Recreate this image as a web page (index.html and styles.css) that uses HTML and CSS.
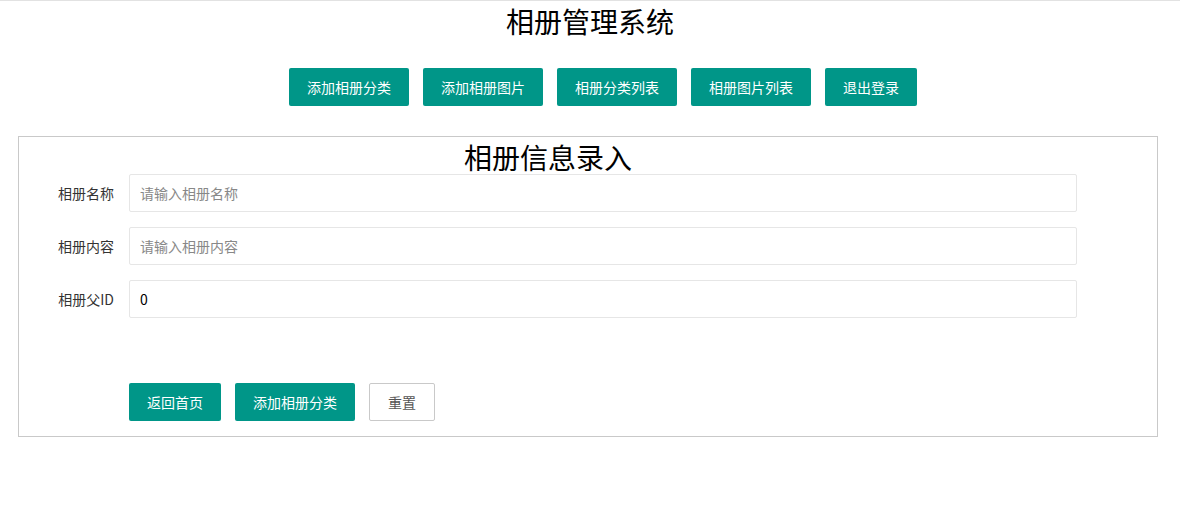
FILE: index.html
```html
<!DOCTYPE html>
<html lang="zh-CN">
<head>
<meta charset="utf-8">
<title>相册管理系统</title>
<link rel="stylesheet" href="styles.css">
</head>
<body>
<div class="page">
  <h1 class="site-title">相册管理系统</h1>
  <nav class="nav">
    <button class="btn">添加相册分类</button>
    <button class="btn">添加相册图片</button>
    <button class="btn">相册分类列表</button>
    <button class="btn">相册图片列表</button>
    <button class="btn">退出登录</button>
  </nav>
  <div class="panel">
    <form class="form">
      <h2 class="form-title">相册信息录入</h2>
      <div class="form-item">
        <label class="form-label">相册名称</label>
        <div class="input-block"><input class="input" type="text" placeholder="请输入相册名称"></div>
      </div>
      <div class="form-item">
        <label class="form-label">相册内容</label>
        <div class="input-block"><input class="input" type="text" placeholder="请输入相册内容"></div>
      </div>
      <div class="form-item">
        <label class="form-label">相册父ID</label>
        <div class="input-block"><input class="input" type="text" value="0"></div>
      </div>
      <div class="form-actions">
        <button type="button" class="btn">返回首页</button>
        <button type="button" class="btn">添加相册分类</button>
        <button type="reset" class="btn btn-primary">重置</button>
      </div>
    </form>
  </div>
</div>
</body>
</html>
```
FILE: styles.css
```css
* { box-sizing: border-box; }
html, body { margin: 0; padding: 0; background: #fff; }
body {
  font-family: "Noto Sans CJK SC", "Noto Sans", "Liberation Sans", sans-serif;
  font-size: 14px;
  color: #333;
}
.page {
  border-top: 1px solid #e2e2e2;
  min-height: 509px;
}
.site-title {
  margin: 0;
  font-size: 28px;
  font-weight: normal;
  color: #000;
  text-align: center;
  height: 40px;
  line-height: 40px;
}
.nav {
  display: flex;
  justify-content: center;
  gap: 14px;
  margin-top: 27px;
  padding-left: 26px;
}
.btn {
  display: inline-block;
  height: 38px;
  line-height: 38px;
  padding: 0 18px;
  border: none;
  border-radius: 2px;
  background: #009688;
  color: #fff;
  font-family: inherit;
  font-size: 14px;
  white-space: nowrap;
  cursor: pointer;
}
.btn-primary {
  background: #fff;
  color: #555;
  border: 1px solid #c9c9c9;
  line-height: 36px;
}
.panel {
  margin: 30px 22px 0 18px;
  border: 1px solid #c9c9c9;
  padding-bottom: 15px;
}
.form {
  width: 1058px;
}
.form-title {
  margin: 0;
  font-size: 28px;
  font-weight: normal;
  color: #000;
  text-align: center;
  height: 37px;
  line-height: 40px;
}
.form-item {
  display: flex;
  margin-bottom: 15px;
}
.form-label {
  width: 110px;
  padding: 9px 15px;
  line-height: 20px;
  text-align: right;
  color: #333;
  flex: none;
}
.input-block {
  flex: 1;
}
.input {
  display: block;
  width: 100%;
  height: 38px;
  border: 1px solid #e6e6e6;
  border-radius: 2px;
  padding-left: 10px;
  font-family: inherit;
  font-size: 14px;
  color: #000;
  outline: none;
  background: #fff;
}
.input::placeholder { color: #888; }
.form-actions {
  display: flex;
  gap: 14px;
  margin-top: 65px;
  padding-left: 110px;
}
```
